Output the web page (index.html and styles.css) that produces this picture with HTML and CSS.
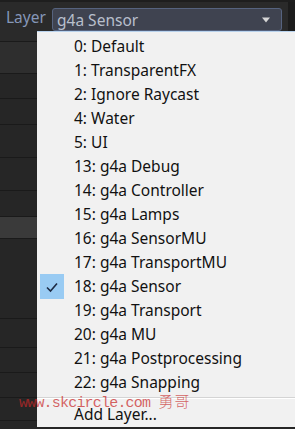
FILE: index.html
```html
<!DOCTYPE html>
<html>
<head>
<meta charset="utf-8">
<link rel="stylesheet" href="styles.css">
</head>
<body>
<div class="app">
  <div class="header">
    <span class="label">Layer</span>
    <div class="select">
      <span class="select-text">g4a Sensor</span>
      <svg class="arrow" width="10" height="6" viewBox="0 0 10 6"><path d="M1 0.5 L9 0.5 L5 5.5 Z" fill="#d6d6d6"/></svg>
    </div>
    <div class="edge"></div>
  </div>
  <div class="rows">
    <div class="row r10"></div>
    <div class="row r32 light"></div>
    <div class="row r25"></div>
    <div class="row r26"></div>
    <div class="row r33"></div>
    <div class="row r33"></div>
    <div class="row r26"></div>
    <div class="row r22 sel"></div>
    <div class="row r80"></div>
    <div class="row r29"></div>
    <div class="row r25"></div>
    <div class="row r25"></div>
    <div class="row r23"></div>
    <div class="row r9"></div>
  </div>

  <div class="menu">
    <ul class="items">
      <li class="item">0: Default</li>
      <li class="item">1: TransparentFX</li>
      <li class="item">2: Ignore Raycast</li>
      <li class="item">4: Water</li>
      <li class="item">5: UI</li>
      <li class="item">13: g4a Debug</li>
      <li class="item">14: g4a Controller</li>
      <li class="item">15: g4a Lamps</li>
      <li class="item">16: g4a SensorMU</li>
      <li class="item">17: g4a TransportMU</li>
      <li class="item checked"><span class="check"><svg width="14" height="12" viewBox="0 0 14 12"><path d="M2 6.5 L5.5 10 L12 2.5" fill="none" stroke="#1d2a44" stroke-width="1.6"/></svg></span>18: g4a Sensor</li>
      <li class="item">19: g4a Transport</li>
      <li class="item">20: g4a MU</li>
      <li class="item">21: g4a Postprocessing</li>
      <li class="item">22: g4a Snapping</li>
    </ul>
    <div class="sep"></div>
    <div class="item add">Add Layer...</div>
  </div>
  <div class="watermark">www.skcircle.com <span class="wm-cjk">勇哥</span></div>
</div>
</body>
</html>
```
FILE: styles.css
```css
* { box-sizing: border-box; }
html, body { margin: 0; padding: 0; }
body { width: 295px; height: 429px; overflow: hidden; background: #262626; }
.app {
  position: relative;
  width: 295px;
  height: 429px;
  font-family: "Noto Sans", "Open Sans", sans-serif;
  background: #262626;
}
.header {
  height: 31px;
  display: flex;
  align-items: center;
  background: #2a2a2a;
  border-top: 2px solid #1e1e1e;
}
.label {
  color: #8597b8;
  font-size: 15.5px;
  margin-left: 6px;
  width: 46px;
}
.select {
  flex: 1;
  height: 23px;
  margin-top: 6px;
  align-self: flex-start;
  background: #3f4350;
  border: 1px solid #56637f;
  border-radius: 3px;
  display: flex;
  align-items: center;
  padding: 0 10px 0 4px;
  margin-right: 6px;
}
.select-text {
  color: #b8bfcc;
  font-size: 15.5px;
  flex: 1;
}
.arrow { display: block; }
.edge { width: 7px; align-self: stretch; background: #1c1c1c; }
.rows { display: flex; flex-direction: column; width: 37px; }
.row { border-top: 1px solid #1a1a1a; background: #262626; }
.r10 { height: 10px; border-top: none; background: #2a2a2a; }
.r32 { height: 32px; }
.r25 { height: 25px; }
.r26 { height: 26px; }
.r33 { height: 33px; }
.r22 { height: 22px; }
.r80 { height: 80px; }
.r29 { height: 29px; }
.r23 { height: 23px; }
.r9 { height: 9px; }
.light { background: #2e2e2e; }
.sel { background: #3a3a3a; }

.menu {
  position: absolute;
  left: 37px;
  top: 31px;
  right: 0;
  bottom: 2px;
  background: #f1f1f1;
  border-top: 1px solid #b9d3ee;
  padding-top: 2px;
}
.items { list-style: none; margin: 0; padding: 0; }
.item {
  position: relative;
  height: 24px;
  line-height: 24px;
  padding-left: 37px;
  font-size: 15.5px;
  color: #111;
  white-space: nowrap;
}
.check {
  position: absolute;
  left: 3px;
  top: 0;
  width: 24px;
  height: 25px;
  background: #99cbf3;
  display: flex;
  align-items: center;
  justify-content: center;
}
.sep {
  height: 2px;
  margin: 3px 0 3px 0;
  border-top: 1px solid #d4d4d4;
  border-bottom: 1px solid #ffffff;
}
.add { height: 24px; }
.watermark {
  position: absolute;
  left: 19px;
  top: 390px;
  font-family: "Liberation Mono", monospace;
  font-size: 15px;
  letter-spacing: -0.8px;
  color: rgba(200, 40, 40, 0.72);
  white-space: nowrap;
}
.wm-cjk {
  font-family: "Noto Sans CJK SC", sans-serif;
  font-size: 15px;
  letter-spacing: 1px;
  font-weight: 300;
}
```
